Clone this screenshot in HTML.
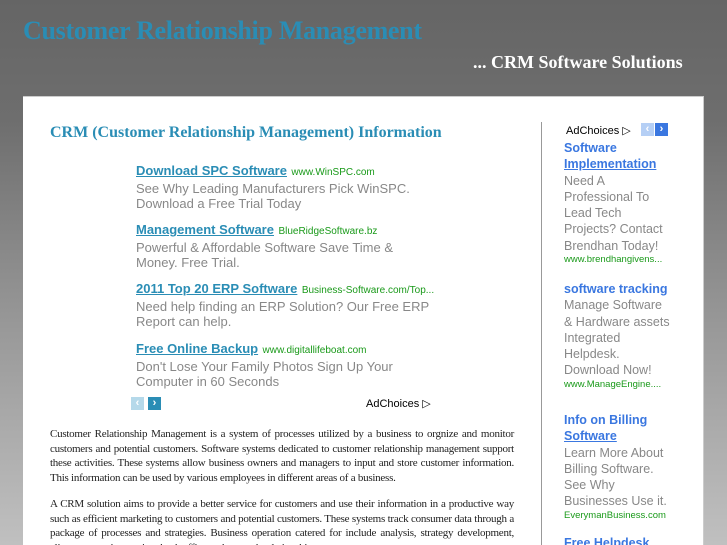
<!DOCTYPE html>
<html style="width:727px;height:545px;overflow:hidden"><head><style>
*{margin:0;padding:0}
body{width:727px;height:545px;overflow:hidden;position:relative;background:linear-gradient(#656565 0px,#6e6e6e 120px,#999 330px,#c0c0c0 545px);font-family:"Liberation Sans",sans-serif}
.a{position:absolute;white-space:nowrap}
h1{position:absolute;left:23px;top:16px;font:bold 26px "Liberation Serif",serif;color:#2a8db5;letter-spacing:-0.3px}
.sub{left:473px;top:52px;font:bold 18px "Liberation Serif",serif;color:#fff}
.panel{position:absolute;left:23px;top:96px;width:680px;height:449px;background:#fff;border-top:1px solid #ccc;border-right:1px solid #ccc}
.div{position:absolute;left:541px;top:122px;width:1px;height:423px;background:#999}
.h2{left:50px;top:124px;font:bold 16px "Liberation Serif",serif;color:#2a8db5}
.t{font-size:13px;color:#2a8db5;font-weight:bold;text-decoration:underline}
.u{font-size:10px;color:#1a9a1a;font-weight:normal;text-decoration:none}
.d{font-size:13px;color:#888;line-height:15px;white-space:normal;width:300px}
.ac{font-size:11px;color:#000}
.arr{position:absolute;width:13px;height:13px;color:#fff;font-size:11px;line-height:13px;text-align:center;font-weight:bold}
.p{position:absolute;left:50px;width:464px;font:11px/14.5px "Liberation Serif",serif;color:#222;text-align:justify;letter-spacing:-0.25px}
.r{position:absolute;left:564px;width:106px;font-size:12.5px;line-height:16.3px}
.r b{color:#3a77e0}
.r .g{color:#888}
.r .s{color:#1a9a1a;font-size:9.5px;line-height:12px;white-space:nowrap}
</style></head><body>
<h1>Customer Relationship Management</h1>
<div class="a sub">... CRM Software Solutions</div>
<div class="panel"></div>
<div class="div"></div>
<div class="a h2">CRM (Customer Relationship Management) Information</div>

<div class="a" style="left:136px;top:162px"><span class="t">Download SPC Software</span> <span class="u">www.WinSPC.com</span></div>
<div class="a d" style="left:136px;top:181px">See Why Leading Manufacturers Pick WinSPC. Download a Free Trial Today</div>
<div class="a" style="left:136px;top:221px"><span class="t">Management Software</span> <span class="u">BlueRidgeSoftware.bz</span></div>
<div class="a d" style="left:136px;top:240px">Powerful &amp; Affordable Software Save Time &amp; Money. Free Trial.</div>
<div class="a" style="left:136px;top:280px"><span class="t">2011 Top 20 ERP Software</span> <span class="u">Business-Software.com/Top...</span></div>
<div class="a d" style="left:136px;top:299px">Need help finding an ERP Solution? Our Free ERP Report can help.</div>
<div class="a" style="left:136px;top:340px"><span class="t">Free Online Backup</span> <span class="u">www.digitallifeboat.com</span></div>
<div class="a d" style="left:136px;top:359px">Don't Lose Your Family Photos Sign Up Your Computer in 60 Seconds</div>

<div class="arr" style="left:131px;top:397px;background:#b5d9ea">&lsaquo;</div>
<div class="arr" style="left:148px;top:397px;background:#2a8db5">&rsaquo;</div>
<div class="a ac" style="left:366px;top:397px">AdChoices &#9655;</div>

<div class="p" style="top:427px">Customer Relationship Management is a system of processes utilized by a business to orgnize and monitor customers and potential customers. Software systems dedicated to customer relationship management support these activities. These systems allow business owners and managers to input and store customer information. This information can be used by various employees in different areas of a business.</div>
<div class="p" style="top:497px">A CRM solution aims to provide a better service for customers and use their information in a productive way such as efficient marketing to customers and potential customers. These systems track consumer data through a package of processes and strategies. Business operation catered for include analysis, strategy development, client contact, integration, back office and network relationships.</div>

<div class="a ac" style="left:566px;top:124px">AdChoices &#9655;</div>
<div class="arr" style="left:641px;top:123px;background:#b5cff5">&lsaquo;</div>
<div class="arr" style="left:655px;top:123px;background:#3a77e0">&rsaquo;</div>
<div class="r" style="top:140px"><b>Software <u>Implementation</u></b><div class="g">Need A Professional To Lead Tech Projects? Contact Brendhan Today!</div><div class="s">www.brendhangivens...</div></div>
<div class="r" style="top:281px"><b>software tracking</b><div class="g">Manage Software &amp; Hardware assets Integrated Helpdesk. Download Now!</div><div class="s">www.ManageEngine....</div></div>
<div class="r" style="top:412px"><b>Info on Billing <u>Software</u></b><div class="g">Learn More About Billing Software. See Why Businesses Use it.</div><div class="s">EverymanBusiness.com</div></div>
<div class="r" style="top:535px"><b>Free Helpdesk</b></div>
</body></html>
